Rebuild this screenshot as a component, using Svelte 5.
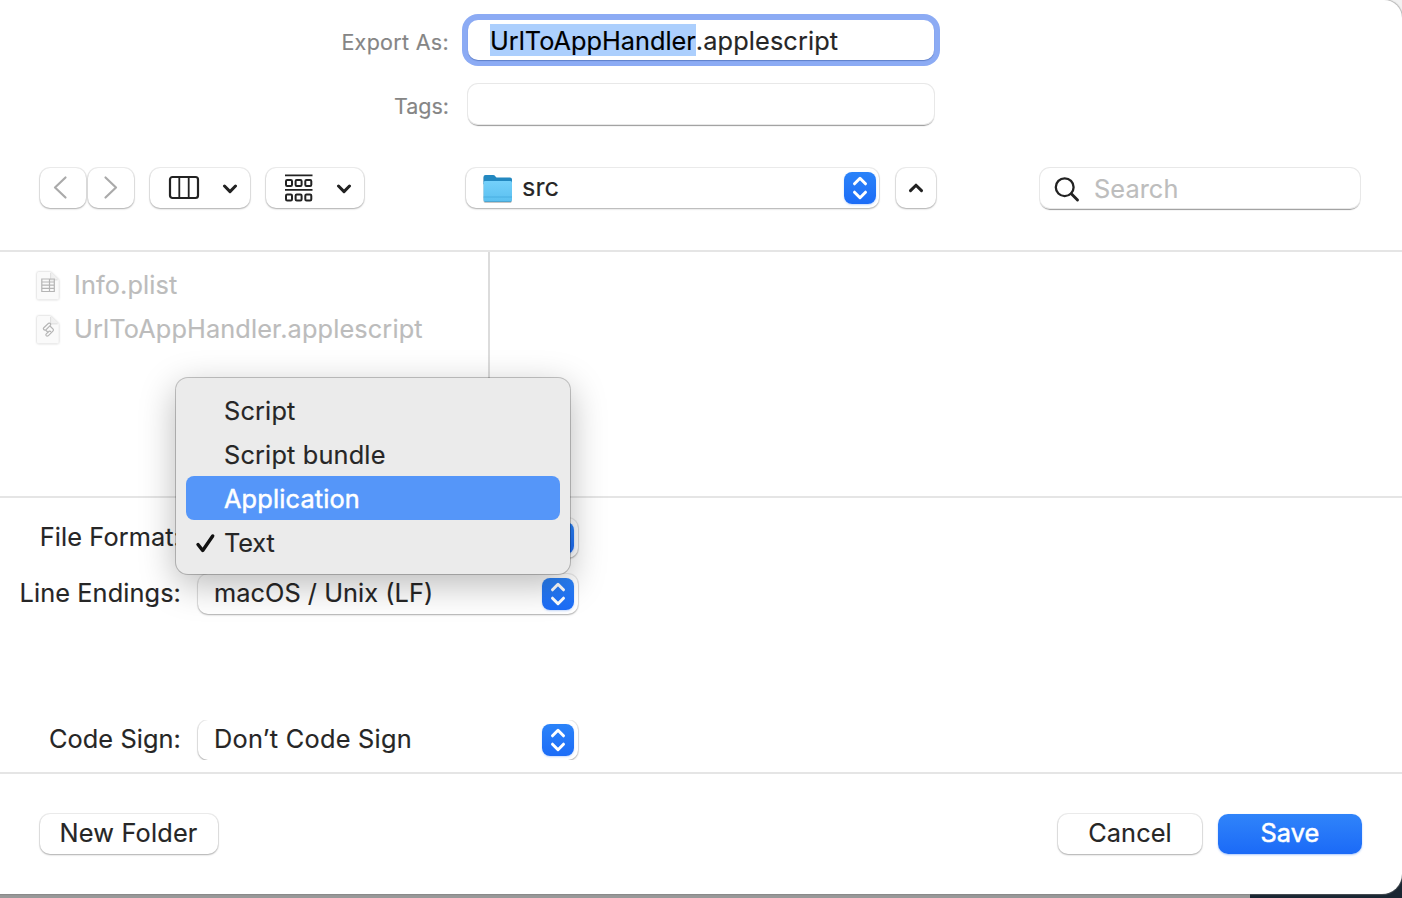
<script>
  const files = [
    { name: 'Info.plist', kind: 'plist' },
    { name: 'UrlToAppHandler.applescript', kind: 'script' },
  ];
  const formats = [
    { name: 'Script' },
    { name: 'Script bundle' },
    { name: 'Application', active: true },
    { name: 'Text', checked: true },
  ];
</script>

{#snippet stepper()}
  <svg class="stepper" width="32" height="32" viewBox="0 0 32 32">
    <path d="M10.5 11.8 16 6.3l5.5 5.5M10.5 20.2 16 25.7l5.5-5.5" />
  </svg>
{/snippet}

{#snippet chevron()}
  <svg class="chevron" width="16" height="10" viewBox="0 0 16 10"><path d="M2.5 2 8 7.6 13.5 2" /></svg>
{/snippet}

<div class="desktop">
  <div class="sheet">
    <header>
      <div class="field-row">
        <label for="name">Export As:</label>
        <div id="name" class="field focused"><span class="selected">UrlToAppHandler</span><span class="ext">.applescript</span></div>
      </div>
      <div class="field-row">
        <label for="tags" class="tags">Tags:</label>
        <div id="tags" class="field"></div>
      </div>
      <div class="toolbar">
        <div class="control nav">
          <svg width="46" height="40" viewBox="0 0 46 40"><path d="M25.5 9.5 15 19.5l10.5 10" /></svg>
        </div>
        <div class="control nav next">
          <svg width="46" height="40" viewBox="0 0 46 40"><path d="M17.5 9.5 28 19.5l-10.5 10" /></svg>
        </div>
        <div class="control view">
          <svg class="glyph" width="32" height="26" viewBox="0 0 32 26">
            <rect x="2" y="2" width="28" height="21" rx="2.5" />
            <path d="M11.3 2v21M20.7 2v21" stroke-width="1.8" />
          </svg>
          {@render chevron()}
        </div>
        <div class="control group">
          <svg class="glyph" width="28" height="28" viewBox="0 0 28 28">
            <path d="M0 1.3h27.500M0 15.8h27.500" stroke-width="1.8" />
            {#each [6, 20.5] as y}
              {#each [1, 10.600, 20.300] as x}
                <rect {x} {y} width="6" height="6" rx="1.2" stroke-width="2" />
              {/each}
            {/each}
          </svg>
          {@render chevron()}
        </div>
        <div class="control path">
          <svg width="30" height="30" viewBox="0 0 30 30">
            <defs>
              <linearGradient id="folder" x1="0" y1="0" x2="0" y2="1">
                <stop offset="0" stop-color="#74d0fa" /><stop offset="1" stop-color="#5bc0f0" />
              </linearGradient>
            </defs>
            <path d="M.5 3q0-2 2-2H10q1.500 0 2.500 1.400.8 1.200 2.300 1.200H27q2 0 2 2V10H.5z" fill="#2388c0" />
            <path d="M.5 8.500Q.5 7 2 7h25.500Q29 7 29 8.500V26q0 1.500-1.500 1.500H2Q.5 27.500.5 26z" fill="url(#folder)" />
            <path d="M.5 23H29" stroke="#45aadd" stroke-width=".8" />
            <path d="M1.500 27.500h26.500" stroke="#3d9fce" stroke-width=".8" />
          </svg>
          <span>src</span>
          {@render stepper()}
        </div>
        <div class="control collapse">
          <svg class="chevron" width="16" height="10" viewBox="0 0 16 10"><path d="M2.500 7.600 8 2.200l5.500 5.400" /></svg>
        </div>
        <div class="field search">
          <svg width="26" height="26" viewBox="0 0 26 26">
            <circle cx="10.700" cy="10.200" r="8.900" /><path d="m17.300 16.800 6.200 6.200" stroke-width="2.900" />
          </svg>
          <span>Search</span>
        </div>
      </div>
    </header>

    <section class="browser">
      <div class="column">
        {#each files as file}
          <div class="file">
            <svg width="26" height="32" viewBox="0 0 26 32">
              <path class="paper" d="M3.500 2h12l8.300 8v18q0 1.500-1.500 1.500H3.500Q2 29.500 2 28V3.500Q2 2 3.500 2z" />
              <path d="M15.500 2v8h8.300z" fill="#f0f0f0" />
              <path d="M15.600 3v6.900h7" stroke="#d5d5d5" stroke-width=".7" />
              {#if file.kind === 'plist'}
                <path class="mark" d="M6.800 9h12.500v12.500H6.800zM6.800 12h12.500M6.800 15.200h12.500M6.800 18.400h12.500M14.500 9v12.500" />
              {:else}
                <path class="mark" d="m8.800 13.700 4.700-4.500q1.300-.5 2 .5.600 1-.4 2l-4.300 4.200q-1.400.4-2.100-.4-.8-.8.100-1.800zM10.800 16.200l2.700 2.500M15 12l3.300 3.300q.5 1-.4 1.800l-4.700 4.700q-1.200.7-2-.1-.8-.9.100-1.800l2.500-2.500q1.300-.7 2.100.5" />
              {/if}
            </svg>
            <span>{file.name}</span>
          </div>
        {/each}
      </div>
    </section>

    <section class="options">
      <div class="option">
        <span class="label">File Format:</span>
        <div class="control popup">{@render stepper()}</div>
      </div>
      <div class="option">
        <span class="label">Line Endings:</span>
        <div class="control popup"><span class="mac">macOS / Unix (LF)</span>{@render stepper()}</div>
      </div>
      <div class="option sign">
        <span class="label">Code Sign:</span>
        <div class="clip">
          <div class="control popup"><span class="dont">Don’t Code Sign</span>{@render stepper()}</div>
          <i></i>
        </div>
      </div>
    </section>

    <footer>
      <div class="control button new">New Folder</div>
      <div class="control button cancel">Cancel</div>
      <div class="button save">Save</div>
    </footer>
  </div>

  <div class="menu">
    {#each formats as format}
      <div class="item" class:active={format.active}>
        {#if format.checked}
          <svg width="22" height="22" viewBox="0 0 22 22"><path d="m4 12.500 4.700 6L18.700 4" /></svg>
        {/if}
        <span>{format.name}</span>
      </div>
    {/each}
  </div>
</div>

<style>
  :global(body) { margin: 0; overflow: hidden; }
  * { box-sizing: border-box; }
  svg { display: block; flex: none; fill: none; }
  .desktop {
    position: relative;
    width: 1402px;
    height: 898px;
    overflow: hidden;
    background:
      linear-gradient(#f2f2f2, #f2f2f2) 100% 0 / 40px 40px no-repeat,
      linear-gradient(90deg, #999 1250px, #1a2632 1250px);
    font: 25.3px/32px Inter, sans-serif;
    letter-spacing: .08px;
    color: #262626;
    white-space: nowrap;
    -webkit-text-stroke-width: .15px;
  }
  .sheet {
    display: flex;
    flex-direction: column;
    height: 894px;
    background: #fff;
    border-radius: 0 18px 20px 0;
    box-shadow: 0 0 1px 1px #77777780;
  }
  header { height: 252px; padding-top: 20px; border-bottom: 2px solid #e5e5e5; flex: none; }
  .field-row { display: flex; align-items: center; height: 40px; margin-bottom: 24px; }
  .field-row label {
    width: 449px;
    margin-right: 19px;
    padding-top: 3px;
    text-align: right;
    font-size: 21.5px;
    letter-spacing: .3px;
    color: #858585;
  }
  .field-row .tags { letter-spacing: 0; }
  .field {
    width: 466px;
    height: 40px;
    border-radius: 10px;
    background: #fff;
    box-shadow: 0 0 0 1px #e8e8e8, 0 1.5px 1px #999;
    display: flex;
    align-items: center;
  }
  .focused { padding-left: 22px; letter-spacing: 0; box-shadow: 0 1px 1px #5f7fc8, 0 0 0 6px #8cabf4; }
  .selected, .ext { height: 32px; line-height: 34px; }
  .ext { letter-spacing: .12px; }
  .selected { background: #accffd; color: #000; }
  .toolbar { display: flex; padding: 0 42px 0 40px; height: 40px; margin-top: 44px; }
  .control {
    display: flex;
    align-items: center;
    height: 40px;
    border-radius: 10px;
    background: #fff;
    box-shadow: 0 0 0 1px #00000012, 0 1px 2px #00000045;
    flex: none;
  }
  .nav { width: 46px; stroke: #aaa; stroke-width: 2.2; stroke-linecap: round; stroke-linejoin: round; }
  .next { margin-left: 2px; }
  .view { width: 100px; margin-left: 16px; padding: 0 12px 0 18px; justify-content: space-between; }
  .group { width: 98px; margin-left: 16px; padding: 0 12px 0 19px; justify-content: space-between; }
  .glyph { stroke: #222; stroke-width: 2.2; margin-top: -1px; }
  .chevron { stroke: #222; stroke-width: 3; stroke-linecap: round; stroke-linejoin: round; margin-top: 2px; }
  .path { width: 413px; margin-left: 102px; padding: 0 3px 0 17px; }
  .path > svg:first-child { margin-top: 2px; filter: drop-shadow(0 1px .7px #00000040); }
  .path span { margin-left: 9px; margin-top: -2px; }
  .stepper {
    margin-left: auto;
    border-radius: 8px;
    background: linear-gradient(#2b83f9, #1c6cf7);
    box-shadow: 0 1px 2px #1c6cf740;
    stroke: #fff;
    stroke-width: 3;
    stroke-linecap: round;
    stroke-linejoin: round;
  }
  .collapse { width: 40px; margin-left: 17px; justify-content: center; }
  .collapse .chevron { margin-top: 0; }
  .search { width: 320px; margin-left: auto; padding-left: 14px; color: #bdbdbd; }
  .search svg { stroke: #222; stroke-width: 2.3; stroke-linecap: round; margin-top: 3px; }
  .search span { margin-left: 14px; margin-top: 2px; }
  .browser { height: 246px; border-bottom: 2px solid #e5e5e5; flex: none; }
  .column { width: 490px; height: 100%; padding-top: 12px; border-right: 2px solid #dcdcdc; }
  .file { display: flex; align-items: center; height: 44px; padding-left: 35px; color: #bcbcbc; letter-spacing: .13px; }
  .file span { margin-left: 13px; margin-top: -2px; }
  .file svg { overflow: visible; }
  .paper { fill: #fafafa; filter: drop-shadow(0 .5px .8px #00000040); }
  .mark { stroke: #b5b5b5; stroke-width: 1.2; }
  .options { height: 276px; padding-top: 20px; border-bottom: 2px solid #e5e5e5; flex: none; }
  .option { display: flex; align-items: center; height: 40px; margin-bottom: 16px; }
  .label { width: 181px; margin-right: 17px; margin-top: -2px; text-align: right; letter-spacing: .1px; }
  .popup { width: 380px; padding: 0 4px 0 16px; }
  .popup span { margin-top: -2px; }
  .mac { letter-spacing: .06px; }
  .dont { letter-spacing: .26px; }
  .sign { margin-top: 106px; }
  .clip { overflow: hidden; padding: 0 2px; margin-left: -2px; height: 40px; }
  footer { display: flex; padding: 40px 40px 0; }
  .button { display: flex; align-items: center; justify-content: center; height: 40px; border-radius: 10px; padding-bottom: 2px; }
  .new { width: 178px; letter-spacing: .2px; padding-right: 1px; }
  .cancel { width: 144px; margin-left: auto; }
  .save { width: 144px; margin-left: 16px; color: #fff; background: linear-gradient(#3084fa, #1b6af7); box-shadow: 0 1px 2px #1c6cf760; -webkit-text-stroke-width: .5px; }
  .menu {
    position: absolute;
    left: 176px;
    top: 378px;
    width: 394px;
    height: 196px;
    padding: 10px;
    border-radius: 12px;
    background: #ebebeb;
    box-shadow: 0 0 0 1px #00000038, 0 10px 36px #00000048;
  }
  .item { display: flex; align-items: center; height: 44px; padding-left: 38px; border-radius: 8px; letter-spacing: .17px; }
  .item span { margin-top: 2px; }
  .item svg { margin-left: -30px; margin-right: 8px; stroke: #111; stroke-width: 3.4; stroke-linecap: round; stroke-linejoin: round; margin-top: 1px; }
  .item:last-child { letter-spacing: -.1px; }
  .active { background: #5596f9; color: #fff; -webkit-text-stroke-width: .5px; }
</style>
